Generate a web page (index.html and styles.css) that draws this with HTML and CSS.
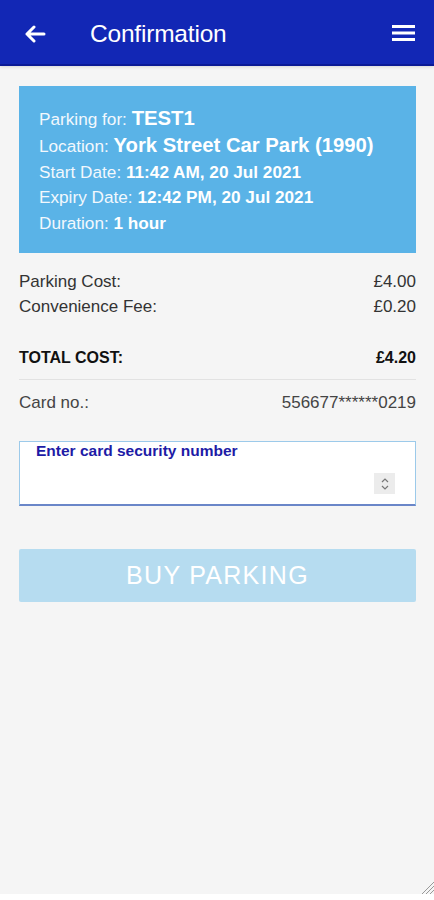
FILE: index.html
```html
<!DOCTYPE html>
<html>
<head>
<meta charset="utf-8">
<link rel="stylesheet" href="styles.css">
</head>
<body>
<div class="app">
  <header class="topbar">
    <svg class="back" width="22" height="18" viewBox="0 0 22 18"><path d="M20 9H3M10 2L3 9l7 7" fill="none" stroke="#fff" stroke-width="3" stroke-linecap="round" stroke-linejoin="round"/></svg>
    <h1 class="title">Confirmation</h1>
    <svg class="menu" width="23" height="16" viewBox="0 0 23 16"><rect x="0" y="0" width="23" height="3" fill="#fff"/><rect x="0" y="6.5" width="23" height="3" fill="#fff"/><rect x="0" y="13" width="23" height="3" fill="#fff"/></svg>
  </header>
  <main class="content">
    <section class="summary">
      <div class="line">Parking for: <b class="big">TEST1</b></div>
      <div class="line">Location: <b class="big">York Street Car Park (1990)</b></div>
      <div class="line">Start Date: <b>11:42 AM, 20 Jul 2021</b></div>
      <div class="line">Expiry Date: <b>12:42 PM, 20 Jul 2021</b></div>
      <div class="line">Duration: <b>1 hour</b></div>
    </section>
    <div class="costs">
      <div class="row"><span>Parking Cost:</span><span>£4.00</span></div>
      <div class="row"><span>Convenience Fee:</span><span>£0.20</span></div>
    </div>
    <div class="row total"><span>TOTAL COST:</span><span>£4.20</span></div>
    <div class="row card"><span>Card no.:</span><span>556677******0219</span></div>
    <div class="field">
      <label class="field-label">Enter card security number</label>
      <div class="spinner">
        <svg width="10" height="16" viewBox="0 0 10 16"><path d="M2 6l3-3 3 3M2 10l3 3 3-3" fill="none" stroke="#777" stroke-width="1.2"/></svg>
      </div>
    </div>
    <button class="buy">BUY PARKING</button>
  </main>
  <div class="grip">
    <svg width="14" height="14" viewBox="0 0 14 14"><path d="M14 2L2 14M14 6L6 14M14 10L10 14" stroke="#999" stroke-width="1"/></svg>
  </div>
</div>
</body>
</html>
```

FILE: styles.css
```css
* { box-sizing: border-box; }
html, body { margin: 0; padding: 0; }
body {
  font-family: Arial, "Liberation Sans", sans-serif;
  background: #ffffff;
  width: 434px;
  height: 900px;
  overflow: hidden;
}
.app {
  position: relative;
  height: 894px;
  background: #f5f5f5;
  display: flex;
  flex-direction: column;
}
.topbar {
  height: 66px;
  background: #1227b5;
  border-bottom: 2px solid #0b1a96;
  display: flex;
  align-items: center;
  padding: 4px 19px 0 24px;
  box-shadow: 0 1px 3px rgba(0,0,0,0.12);
  flex-shrink: 0;
}
.back { margin-top: -1px; }
.title {
  margin: 0 0 0 44px;
  font-size: 24.5px;
  font-weight: normal;
  color: #fff;
  flex: 1;
  letter-spacing: -0.2px;
}
.menu { margin-top: -2px; }
.content {
  padding: 20px 18px 0 19px;
  display: flex;
  flex-direction: column;
}
.summary {
  background: #5ab3e7;
  color: #fff;
  padding: 20px 20px 15px 20px;
  height: 167px;
}
.line {
  font-size: 17.2px;
  line-height: 25.8px;
  color: #f2f8fd;
  white-space: nowrap;
}
.line b { font-weight: bold; color: #fff; }
.line b.big { font-size: 20.3px; }
.row {
  display: flex;
  justify-content: space-between;
  font-size: 17px;
  color: #333;
}
.costs { margin-top: 16px; }
.costs .row { line-height: 25px; }
.total {
  margin-top: 30px;
  font-weight: bold;
  font-size: 16px;
  color: #111;
  padding-bottom: 12px;
  border-bottom: 1px solid #e2e2e2;
  line-height: 18px;
}
.card {
  margin-top: 12px;
  line-height: 22px;
  color: #444;
}
.field {
  margin-top: 27px;
  height: 65px;
  background: #fff;
  border: 1px solid #9ccaea;
  border-bottom: 2px solid #6a86c8;
  position: relative;
  display: flex;
  flex-direction: column;
  padding: 0 0 0 16px;
}
.field-label {
  font-size: 15.5px;
  font-weight: bold;
  color: #1d1ba6;
  line-height: 17px;
}
.spinner {
  position: absolute;
  right: 20px;
  top: 31px;
  width: 21px;
  height: 21px;
  background: #ececec;
  display: flex;
  align-items: center;
  justify-content: center;
}
.buy {
  margin-top: 43px;
  height: 53px;
  width: 100%;
  border: none;
  border-radius: 2px;
  background: #b6dcf0;
  color: #fff;
  font-family: Arial, "Liberation Sans", sans-serif;
  font-size: 25px;
  letter-spacing: 1.3px;
  padding: 0;
}
.grip {
  position: absolute;
  right: 0;
  bottom: 0;
  width: 14px;
  height: 14px;
  display: flex;
}
```
